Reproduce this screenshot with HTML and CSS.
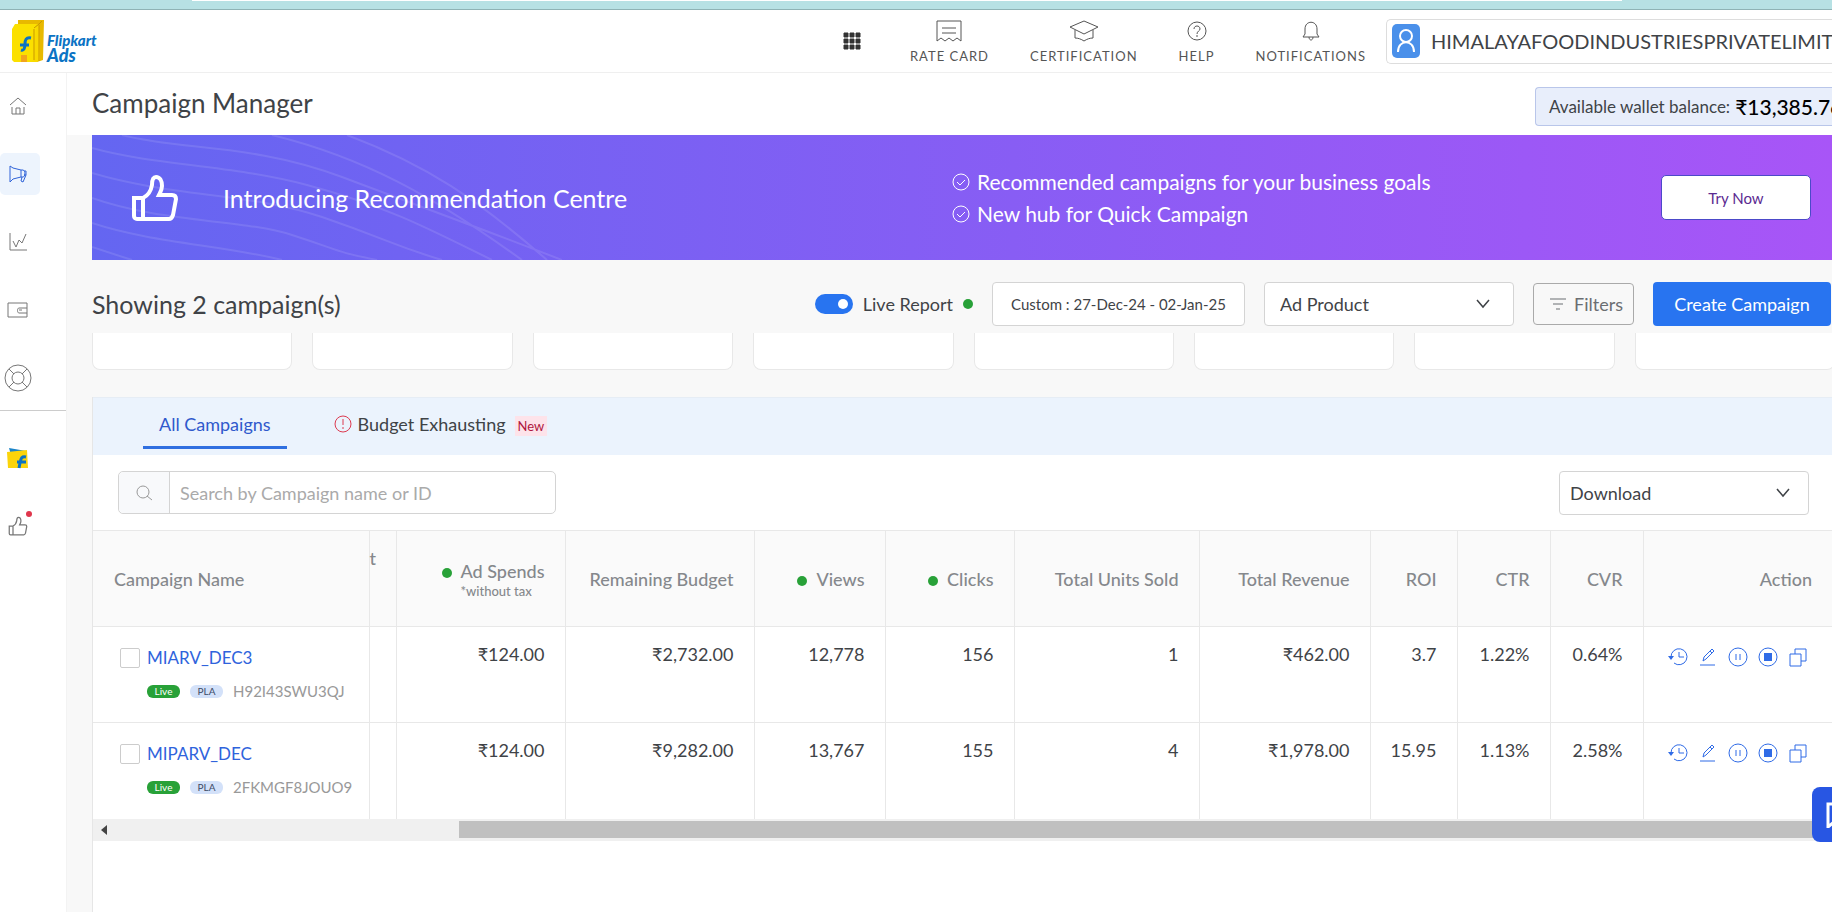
FILE: index.html
```html
<!DOCTYPE html>
<html lang="en">
<head>
  <meta charset="utf-8">
  <title>Campaign Manager | Flipkart Ads</title>
  <link rel="stylesheet" href="styles.css">
</head>
<body>
  <!-- shared icons -->
  <svg class="defs" width="0" height="0" aria-hidden="true">
    <symbol id="i-chevron" viewBox="0 0 14 10"><path d="M1 1l6 7 6-7"/></symbol>
    <symbol id="i-thumb" viewBox="0 0 48 48">
      <path d="M3 24h9v21H6a3 3 0 0 1-3-3zM12 24c6-3 8-7 9-13 0-5 1-8 4-8 4 0 6 4 6 9 0 4-2 7-3 9h13c3 0 4 2 4 4l-3 16c-1 3-2 4-4 4H12"/>
    </symbol>
    <symbol id="i-check" viewBox="0 0 18 18"><circle cx="9" cy="9" r="8"/><path d="M5 9l3 3 5-5"/></symbol>
    <symbol id="i-history" viewBox="0 0 20 20"><path d="M3 10a8 8 0 1 1 3 6M11 5v5h5"/><path d="M0 9h6l-3 4z" fill="currentColor" stroke="none"/></symbol>
    <symbol id="i-edit" viewBox="0 0 20 20"><path d="M2 18h15M5 14l1-4 8-8 2 2-8 8zM12 4l2 2"/></symbol>
    <symbol id="i-pause" viewBox="0 0 20 20"><circle cx="10" cy="10" r="9"/><path d="M8 7v6M12 7v6"/></symbol>
    <symbol id="i-stop" viewBox="0 0 20 20"><circle cx="10" cy="10" r="9"/><rect x="6" y="6" width="8" height="8" fill="currentColor" stroke="none"/></symbol>
    <symbol id="i-copy" viewBox="0 0 20 20"><path d="M2 7h11v12H2zM7 7V2h11v12h-5"/></symbol>
  </svg>

  <div class="window-strip"></div>

  <header class="topbar">
    <a class="brand" href="#">
      <svg width="33" height="43" viewBox="0 0 33 43">
        <path d="M6 0h26l-1 40-6 2H6z" fill="#e8b900"/>
        <path d="M3 4h24l1 36-3 2H3z" fill="#f9d900"/>
        <path d="M0 9l3-5h21l-2 36-3 2H2l-2-2z" fill="#fbe000"/>
        <path d="M22 8l5-4 3-3M22 9v31M27 5v36" fill="none" stroke="#c99700"/>
        <path d="M9 35h6v7H9z" fill="#f2a51c"/>
        <path d="M19 18c-5-1-6 2-6 6s-1 7-4 6M8 25h9" fill="none" stroke="#0b73c4" stroke-width="3"/>
      </svg>
      <span class="brand-name"><span>Flipkart</span><span class="brand-ads">Ads</span></span>
    </a>
    <button class="apps" aria-label="Apps">
      <svg width="18" height="18" viewBox="0 0 18 18"><path d="M1 1h4v4H1zM7 1h4v4H7zM13 1h4v4h-4zM1 7h4v4H1zM7 7h4v4H7zM13 7h4v4h-4zM1 13h4v4H1zM7 13h4v4H7zM13 13h4v4h-4z"/></svg>
    </button>
    <nav class="topnav">
      <a href="#">
        <svg width="26" height="22" viewBox="0 0 26 22"><path d="M1 1h24v20l-4-3-4 3-4-3-4 3-4-3-4 3zM6 8h14M6 13h14"/></svg>
        RATE CARD
      </a>
      <a href="#">
        <svg width="30" height="22" viewBox="0 0 30 22"><path d="M15 1l14 6-14 7L1 7zM6 10v8c3 0 6 1 9 3 3-2 6-3 9-3v-8"/></svg>
        CERTIFICATION
      </a>
      <a href="#">
        <svg width="20" height="22" viewBox="0 0 20 22"><circle cx="10" cy="11" r="9"/><path d="M7 9c0-4 6-4 6 0 0 2-3 2-3 5M10 15v2"/></svg>
        HELP
      </a>
      <a href="#">
        <svg width="18" height="22" viewBox="0 0 18 22"><path d="M1 17h16l-2-3V9c0-9-12-9-12 0v5zM7 17c0 4 4 4 4 0"/></svg>
        NOTIFICATIONS
      </a>
    </nav>
    <button class="account">
      <span class="avatar">
        <svg width="18" height="24" viewBox="0 0 18 24"><circle cx="9" cy="7" r="6"/><path d="M1 23c0-13 16-13 16 0"/></svg>
      </span>
      HIMALAYAFOODINDUSTRIESPRIVATELIMITED
    </button>
  </header>

  <div class="layout">
    <nav class="sidebar">
      <a href="#" aria-label="Home"><svg width="18" height="20" viewBox="0 0 18 20"><path d="M1 9l8-7 8 7M3 11v7h12v-7M7 18v-6h4v6"/></svg></a>
      <a href="#" class="active" aria-label="Campaigns"><svg width="20" height="20" viewBox="0 0 20 20"><path d="M2 2v16l3-3 8-2h2c2 0 3-6 0-7h-2L5 4zM13 6v7M14 13l-1 4 2 1 3-7M16 7h2v4h-2"/></svg></a>
      <a href="#" aria-label="Reports"><svg width="20" height="20" viewBox="0 0 20 20"><path d="M2 1v17h17M5 9l3 6 3-7 3 3 4-9"/></svg></a>
      <a href="#" aria-label="Wallet"><svg width="22" height="18" viewBox="0 0 22 18"><path d="M1 2h19v14H1zM20 7h-8c-2 0-2 5 0 5h8M12 9h3"/></svg></a>
      <a href="#" aria-label="Support"><svg width="28" height="28" viewBox="0 0 28 28"><circle cx="14" cy="14" r="13"/><circle cx="14" cy="14" r="6"/><path d="M5 5l5 5M18 18l5 5M23 5l-5 5M10 18l-5 5"/></svg></a>
      <hr>
      <a href="#" aria-label="Flipkart"><svg width="22" height="22" viewBox="0 0 22 22"><path d="M2 1l17 3v4H4z" fill="#1b84c8" stroke="none"/><path d="M0 5l20-2 1 18H1z" fill="#fbd40a" stroke="none"/><path d="M19 10c-5-1-5 2-6 6l-1 5M10 15h9" stroke="#0b73c4" stroke-width="3"/></svg></a>
      <a href="#" class="has-dot" aria-label="Recommendations"><svg width="20" height="20"><use href="#i-thumb"/></svg></a>
    </nav>

    <main>
      <div class="page-title">
        <h1>Campaign Manager</h1>
        <div class="wallet">Available wallet balance: <strong>₹13,385.76</strong></div>
      </div>

      <section class="banner">
        <svg class="waves" width="470" height="125" viewBox="0 0 470 125">
          <path d="M30 0C90 16 160 8 250 42S380 90 470 125M0 13C60 30 140 30 215 50S330 90 400 125M0 38C80 62 160 58 230 82S300 110 350 125M0 63C70 88 150 84 200 100S240 116 285 125M0 88C60 108 130 110 190 125M0 112l40 13M180 0c90 22 160 60 250 125M255 0c80 30 130 64 200 125"/>
        </svg>
        <svg class="banner-thumb" width="48" height="48"><use href="#i-thumb"/></svg>
        <h2>Introducing Recommendation Centre</h2>
        <ul>
          <li><svg width="18" height="18"><use href="#i-check"/></svg>Recommended campaigns for your business goals</li>
          <li><svg width="18" height="18"><use href="#i-check"/></svg>New hub for Quick Campaign</li>
        </ul>
        <button class="try">Try Now</button>
      </section>

      <div class="toolbar">
        <h2>Showing 2 campaign(s)</h2>
        <label class="live"><input type="checkbox" class="switch" checked>Live Report<i class="dot"></i></label>
        <button class="date">Custom : 27-Dec-24 - 02-Jan-25</button>
        <div class="picker">
          <select aria-label="Ad Product"><option>Ad Product</option></select>
          <svg width="14" height="10"><use href="#i-chevron"/></svg>
        </div>
        <button class="filters"><svg width="16" height="12" viewBox="0 0 16 12"><path d="M0 1h16M3 6h10M6 11h4"/></svg>Filters</button>
        <button class="create">Create Campaign</button>
      </div>

      <div class="cards">
        <div></div><div></div><div></div><div></div><div></div><div></div><div></div><div></div>
      </div>

      <section class="panel">
        <div class="tabs">
          <button class="tab current">All Campaigns</button>
          <button class="tab">
            <svg width="18" height="18" viewBox="0 0 18 18"><circle cx="9" cy="9" r="8"/><path d="M9 4v6M9 12v2"/></svg>
            Budget Exhausting
            <span class="new">New</span>
          </button>
        </div>

        <div class="tools">
          <div class="search">
            <label for="search" aria-label="Search"><svg width="18" height="18" viewBox="0 0 18 18"><circle cx="8" cy="8" r="6"/><path d="M12 12l5 4"/></svg></label>
            <input id="search" type="text" placeholder="Search by Campaign name or ID">
          </div>
          <div class="picker download">
            <select aria-label="Download"><option>Download</option></select>
            <svg width="14" height="10"><use href="#i-chevron"/></svg>
          </div>
        </div>

        <table>
          <colgroup>
            <col class="c-name"><col class="c-cut"><col class="c-spend"><col class="c-budget"><col class="c-views"><col class="c-clicks"><col class="c-units"><col class="c-revenue"><col class="c-roi"><col class="c-rate"><col class="c-rate"><col>
          </colgroup>
          <thead>
            <tr>
              <th class="name">Campaign Name</th>
              <th class="cut">t</th>
              <th><span class="spend"><i class="dot"></i><span>Ad Spends<small>*without tax</small></span></span></th>
              <th>Remaining Budget</th>
              <th><i class="dot"></i>Views</th>
              <th><i class="dot"></i>Clicks</th>
              <th>Total Units Sold</th>
              <th>Total Revenue</th>
              <th>ROI</th>
              <th>CTR</th>
              <th>CVR</th>
              <th>Action</th>
            </tr>
          </thead>
          <tbody>
            <tr>
              <td class="name">
                <div class="campaign"><input type="checkbox" aria-label="Select MIARV_DEC3"><a href="#">MIARV_DEC3</a></div>
                <div class="meta"><span class="tag live-tag">Live</span><span class="tag">PLA</span>H92I43SWU3QJ</div>
              </td>
              <td></td>
              <td>₹124.00</td>
              <td>₹2,732.00</td>
              <td>12,778</td>
              <td>156</td>
              <td>1</td>
              <td>₹462.00</td>
              <td>3.7</td>
              <td>1.22%</td>
              <td>0.64%</td>
              <td>
                <div class="actions">
                  <button aria-label="History"><svg><use href="#i-history"/></svg></button>
                  <button aria-label="Edit"><svg><use href="#i-edit"/></svg></button>
                  <button aria-label="Pause"><svg><use href="#i-pause"/></svg></button>
                  <button aria-label="Stop"><svg><use href="#i-stop"/></svg></button>
                  <button aria-label="Copy"><svg><use href="#i-copy"/></svg></button>
                </div>
              </td>
            </tr>
            <tr>
              <td class="name">
                <div class="campaign"><input type="checkbox" aria-label="Select MIPARV_DEC"><a href="#">MIPARV_DEC</a></div>
                <div class="meta"><span class="tag live-tag">Live</span><span class="tag">PLA</span>2FKMGF8JOUO9</div>
              </td>
              <td></td>
              <td>₹124.00</td>
              <td>₹9,282.00</td>
              <td>13,767</td>
              <td>155</td>
              <td>4</td>
              <td>₹1,978.00</td>
              <td>15.95</td>
              <td>1.13%</td>
              <td>2.58%</td>
              <td>
                <div class="actions">
                  <button aria-label="History"><svg><use href="#i-history"/></svg></button>
                  <button aria-label="Edit"><svg><use href="#i-edit"/></svg></button>
                  <button aria-label="Pause"><svg><use href="#i-pause"/></svg></button>
                  <button aria-label="Stop"><svg><use href="#i-stop"/></svg></button>
                  <button aria-label="Copy"><svg><use href="#i-copy"/></svg></button>
                </div>
              </td>
            </tr>
          </tbody>
        </table>
        <div class="scrollbar">
          <svg width="6" height="10" viewBox="0 0 6 10"><path d="M6 0v10L0 5z"/></svg>
          <div class="thumb"></div>
        </div>
      </section>
    </main>
  </div>

  <button class="chat" aria-label="Chat">
    <svg width="28" height="26" viewBox="0 0 28 26"><path d="M2 2h24v18H8l-6 5z"/></svg>
  </button>
</body>
</html>
```
FILE: styles.css
```css
* {
  box-sizing: border-box;
}

body {
  margin: 0;
  min-height: 100vh;
  display: flex;
  flex-direction: column;
  overflow: hidden;
  background: #f8f8f8;
  color: #3f4347;
  font-family: Lato, "Noto Sans", sans-serif;
  font-size: 18px;
  line-height: 24px;
}

svg {
  flex: none;
  fill: none;
  stroke: currentColor;
}

.defs {
  position: absolute;
}

h1, h2, ul {
  margin: 0;
  padding: 0;
  font-weight: 400;
}

a {
  color: inherit;
  text-decoration: none;
}

button, input, select {
  margin: 0;
  padding: 0;
  border: 0;
  background: none;
  color: inherit;
  font: inherit;
}

button {
  cursor: pointer;
}

.window-strip {
  flex: none;
  height: 10px;
  background: #b7e1e4;
  border-bottom: 1px solid #8fb3b5;
}

.window-strip::before {
  content: "";
  display: block;
  height: 1px;
  margin: 0 210px 0 192px;
  background: #fff;
}

/* top bar */

.topbar {
  flex: none;
  display: flex;
  align-items: center;
  height: 63px;
  padding-left: 12px;
  background: #fff;
  border-bottom: 1px solid #efefef;
}

.brand {
  display: flex;
  align-items: flex-end;
  gap: 2px;
  margin-right: auto;
  color: #0b73c4;
}

.brand svg {
  stroke: none;
}

.brand-name {
  display: flex;
  flex-direction: column;
  font-size: 15px;
  font-weight: 900;
  font-style: italic;
  line-height: 15px;
}

.brand-ads {
  font-size: 18px;
}

.apps {
  height: 18px;
  color: #333;
  line-height: 0;
}

.apps svg {
  fill: currentColor;
}

.topnav {
  display: flex;
  gap: 41px;
  margin: 0 20px 0 49px;
}

.topnav a {
  display: flex;
  flex-direction: column;
  align-items: center;
  gap: 6px;
  padding-top: 2px;
  color: #555;
  font-size: 13px;
  line-height: 16px;
  letter-spacing: 1px;
}

.account {
  flex: none;
  display: flex;
  align-items: center;
  gap: 11px;
  width: 446px;
  height: 45px;
  padding-left: 5px;
  border: 1px solid #ddd;
  border-right: 0;
  border-radius: 5px 0 0 5px;
  font-size: 20px;
  overflow: hidden;
}

.avatar {
  flex: none;
  display: flex;
  align-items: center;
  justify-content: center;
  width: 28px;
  height: 34px;
  border-radius: 5px;
  background: #4a90ea;
  color: #fff;
}

.avatar svg {
  stroke-width: 2;
}

/* side bar */

.layout {
  flex: 1;
  display: flex;
}

.sidebar {
  flex: none;
  display: flex;
  flex-direction: column;
  gap: 26px;
  width: 67px;
  padding-top: 12px;
  background: #fff;
  color: #777;
  border-right: 1px solid #f3f3f3;
}

.sidebar a {
  display: flex;
  align-items: center;
  justify-content: center;
  width: 40px;
  height: 42px;
  padding-right: 5px;
}

.sidebar .active {
  background: #edf4fd;
  border-radius: 5px;
  color: #2f63d8;
}

.sidebar hr {
  width: 100%;
  height: 1px;
  margin: -15px 0 0;
  border: 0;
  background: #ccc;
}

.sidebar .has-dot {
  position: relative;
}

.sidebar .has-dot svg {
  stroke-width: 3;
}

.has-dot::after {
  content: "";
  position: absolute;
  top: 6px;
  right: 8px;
  width: 6px;
  height: 6px;
  border-radius: 50%;
  background: #e0364c;
}

/* page head */

main {
  flex: 1;
  min-width: 0;
  display: flex;
  flex-direction: column;
}

.page-title {
  display: flex;
  align-items: center;
  justify-content: space-between;
  height: 62px;
  padding: 4px 0 6px 25px;
  background: #fff;
}

.page-title h1 {
  font-size: 26px;
}

.wallet {
  display: flex;
  align-items: center;
  gap: 5px;
  width: 297px;
  height: 39px;
  margin-top: 7px;
  padding-left: 13px;
  border: 1px solid #b9c6ea;
  border-right: 0;
  border-radius: 4px 0 0 4px;
  background: #e8eefb;
  font-size: 17px;
  white-space: nowrap;
  overflow: hidden;
}

.wallet strong {
  color: #000;
  font-size: 21px;
  font-weight: 500;
}

.banner {
  position: relative;
  display: flex;
  align-items: center;
  height: 125px;
  margin-left: 25px;
  padding: 0 21px 0 39px;
  background: linear-gradient(90deg, #6466f1, #a855f7);
  color: #fff;
}

.waves {
  position: absolute;
  top: 0;
  left: 0;
  stroke-width: 2;
  opacity: 0.1;
}

.banner-thumb {
  margin-right: 44px;
  stroke-width: 4;
}

.banner h2 {
  flex: 1;
  font-size: 25px;
}

.banner ul {
  flex: 1;
  margin: 0 -10px 0 10px;
  list-style: none;
  font-size: 21px;
  line-height: 32px;
}

.banner li {
  display: flex;
  align-items: center;
  gap: 7px;
}

.try {
  width: 150px;
  height: 45px;
  border: 1px solid #4c49c9;
  border-radius: 5px;
  background: #fff;
  color: #5b2a91;
  font-size: 15px;
}

/* toolbar */

.toolbar {
  display: flex;
  align-items: center;
  gap: 19px;
  height: 73px;
  padding: 15px 1px 0 25px;
}

.toolbar h2 {
  margin-right: auto;
  font-size: 25px;
}

.live {
  display: flex;
  align-items: center;
  gap: 10px;
}

.switch {
  appearance: none;
  width: 38px;
  height: 20px;
  padding: 5px;
  border-radius: 10px;
  background: #2874f0;
}

.switch::before {
  content: "";
  display: block;
  width: 10px;
  height: 10px;
  margin-left: auto;
  border-radius: 50%;
  background: #fff;
}

.dot {
  display: inline-block;
  width: 10px;
  height: 10px;
  border-radius: 50%;
  background: #28a138;
}

.date {
  width: 253px;
  height: 44px;
  border: 1px solid #d4d4d4;
  border-radius: 4px;
  background: #fff;
  font-size: 15px;
}

.picker {
  display: grid;
  align-items: center;
  width: 250px;
  height: 44px;
  border: 1px solid #d4d4d4;
  border-radius: 4px;
  background: #fff;
}

.picker select,
.picker svg {
  grid-area: 1 / 1;
}

.picker select {
  appearance: none;
  width: 100%;
  height: 42px;
  padding-left: 15px;
}

.picker svg {
  justify-self: end;
  margin-right: 23px;
  stroke-width: 1.5;
  pointer-events: none;
}

.filters {
  display: flex;
  align-items: center;
  justify-content: center;
  gap: 8px;
  width: 101px;
  height: 42px;
  padding-left: 6px;
  border: 1px solid #aaa;
  border-radius: 4px;
  color: #6b6e72;
}

.create {
  width: 178px;
  height: 44px;
  border-radius: 4px;
  background: #2874f0;
  color: #fff;
}

/* summary cards, cut by the toolbar above */

.cards {
  display: grid;
  grid-template-columns: repeat(8, 1fr);
  gap: 20px;
  margin: 0 -3px 27px 25px;
}

.cards div {
  height: 37px;
  border: 1px solid #e8e8e8;
  border-top: 0;
  border-radius: 0 0 8px 8px;
  background: #fff;
}

/* campaign panel */

.panel {
  flex: 1;
  margin-left: 25px;
  border-left: 1px solid #e6e6e6;
  background: #fff;
}

.tabs {
  display: flex;
  gap: 31px;
  height: 58px;
  padding-left: 50px;
  border-top: 1px solid #e6edf5;
  background: #ebf3fd;
}

.tab {
  display: flex;
  align-items: center;
  gap: 6px;
  height: 51px;
  padding: 3px 16px 0;
  border-bottom: 3px solid transparent;
}

.tab svg {
  color: #dc3a50;
}

.tab.current {
  border-color: #2f6fe0;
  color: #3059cc;
}

.new {
  padding: 0 3px;
  margin: 4px 0 0 3px;
  background: #fde3ea;
  color: #b0173f;
  font-size: 13px;
  line-height: 20px;
}

.tools {
  display: flex;
  align-items: center;
  justify-content: space-between;
  height: 75px;
  padding: 0 23px 0 25px;
}

.search {
  display: flex;
  width: 438px;
  height: 43px;
  border: 1px solid #d4d4d4;
  border-radius: 5px;
}

.search label {
  display: flex;
  align-items: center;
  justify-content: center;
  width: 51px;
  border-right: 1px solid #d4d4d4;
  border-radius: 5px 0 0 5px;
  background: #f8f9fb;
  color: #999;
}

.search input {
  flex: 1;
  padding-left: 10px;
}

.search input::placeholder {
  color: #aaa;
}

.download select {
  padding-left: 10px;
}

.download svg {
  margin-right: 18px;
}

table {
  width: 100%;
  table-layout: fixed;
  border-collapse: collapse;
}

.c-name { width: 276px; }
.c-cut { width: 27px; }
.c-spend { width: 169px; }
.c-budget { width: 189px; }
.c-views { width: 131px; }
.c-clicks { width: 129px; }
.c-units { width: 185px; }
.c-revenue { width: 171px; }
.c-roi { width: 87px; }
.c-rate { width: 93px; }

th, td {
  height: 96px;
  padding: 0 20px 0 0;
  border: 1px solid #e8e8e8;
  border-width: 1px 1px 0 0;
  text-align: right;
  white-space: nowrap;
}

th {
  background: #fafafa;
  color: #85888c;
  font-weight: 500;
}

td {
  padding-top: 15px;
  vertical-align: top;
}

th:last-child,
td:last-child {
  border-right: 0;
}

th .dot {
  margin-right: 9px;
}

.name {
  text-align: left;
}

th.name {
  padding-left: 21px;
}

td.name {
  padding: 19px 0 0 27px;
}

.cut {
  padding-top: 15px;
  vertical-align: top;
}

.spend {
  display: inline-flex;
  align-items: baseline;
  text-align: left;
}

.spend small {
  display: block;
  font-size: 13px;
  line-height: 16px;
}

.campaign {
  display: flex;
  align-items: center;
  gap: 7px;
  color: #2f63dc;
  font-size: 17px;
}

.campaign input {
  appearance: none;
  width: 20px;
  height: 20px;
  border: 1px solid #ccc;
  border-radius: 2px;
}

.meta {
  display: flex;
  align-items: center;
  gap: 10px;
  padding: 9px 0 0 27px;
  color: #999;
  font-size: 15px;
}

.tag {
  width: 33px;
  border-radius: 6px;
  background: #d3e1f9;
  color: #3c4a66;
  font-size: 10px;
  line-height: 13px;
  text-align: center;
}

.live-tag {
  background: #28a138;
  color: #fff;
}

.actions {
  display: flex;
  justify-content: flex-end;
  gap: 10px;
  padding: 5px 4px 0 0;
  color: #2f6be6;
}

.actions button {
  height: 20px;
  line-height: 0;
}

.actions svg {
  width: 20px;
  height: 20px;
}

.scrollbar {
  display: flex;
  align-items: center;
  gap: 352px;
  height: 22px;
  padding-left: 8px;
  background: #f0f0f0;
}

.scrollbar svg {
  fill: #444;
  stroke: none;
}

.thumb {
  flex: 1;
  height: 17px;
  background: #c0c0c0;
}

.chat {
  position: fixed;
  right: -36px;
  bottom: 70px;
  display: flex;
  align-items: center;
  width: 56px;
  height: 55px;
  padding-left: 14px;
  border-radius: 8px;
  background: #2856e3;
  color: #fff;
}

.chat svg {
  stroke-width: 3;
}
```
